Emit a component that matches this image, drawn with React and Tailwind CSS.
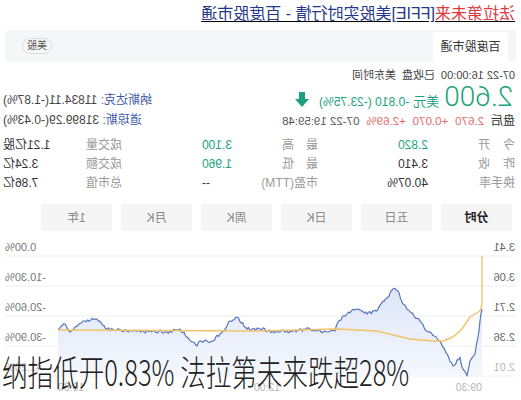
import React from 'react';

const FONT = { fontFamily: '"Liberation Sans", "Noto Sans CJK SC", sans-serif' };

// price line, page coords (drawn un-mirrored, container is flipped)
const pricePts = [
  [39, 310], [41, 322], [43, 338], [46, 355], [51, 362], [54, 377], [59, 368], [61, 358], [68, 367],
  [74, 355], [81, 342], [94, 332], [101, 322], [108, 315], [118, 305], [123, 292], [128, 290],
  [133, 298], [138, 302], [144, 312], [154, 315], [164, 310], [174, 315], [183, 323], [186, 332],
  [194, 333], [211, 330], [228, 332], [244, 333], [261, 330], [274, 330], [284, 318], [291, 322],
  [298, 332], [308, 342], [321, 342], [324, 347], [334, 338], [341, 330], [354, 333], [388, 332],
  [414, 330], [424, 320], [438, 322], [451, 333], [456, 325], [463, 330],
];

const avgPts = [
  [39, 257], [39, 305], [41, 312], [51, 318], [59, 330], [68, 338], [78, 342], [88, 342],
  [111, 340], [144, 332], [184, 330], [261, 332], [463, 331],
];

const noise = (i) => {
  const v = Math.sin(i * 12.9898) * 43758.5453;
  return v - Math.floor(v) - 0.5;
};

const jagged = (pts, amp) => {
  const out = [];
  let k = 0;
  for (let i = 0; i < pts.length - 1; i++) {
    const [x1, y1] = pts[i];
    const [x2, y2] = pts[i + 1];
    const steps = Math.max(1, Math.ceil((x2 - x1) / 1.6));
    for (let s = 0; s < steps; s++) {
      const t = s / steps;
      const y = y1 + (y2 - y1) * t + (s === 0 ? 0 : noise(k++) * amp * 2);
      out.push([x1 + (x2 - x1) * t, y]);
    }
  }
  out.push(pts[pts.length - 1]);
  return out;
};

const toPath = (pts) => pts.map((p, i) => `${i ? 'L' : 'M'}${p[0].toFixed(1)} ${p[1].toFixed(1)}`).join(' ');

const stats = [
  ['今', '开', '2.820', 'text-[#1ba27c]', '最', '高', '3.100', 'text-[#1ba27c]', '成交量', '1.21亿股'],
  ['昨', '收', '3.410', 'text-[#333]', '最', '低', '1.960', 'text-[#1ba27c]', '成交额', '3.24亿'],
  ['换手率', null, '40.07%', 'text-[#333]', '市盈(TTM)', null, '--', 'text-[#333]', '总市值', '7.86亿'],
];

const periods = ['分时', '五日', '日K', '周K', '月K', '1年'];

const Chart = () => {
  const line = jagged(pricePts, 1.6);
  const fill = `${toPath(line)} L463 378 L39 378 Z`;
  const grid = [257, 287, 317, 347, 377];
  const left = ['3.41', '3.06', '2.71', '2.36', '2.01'];
  const right = ['0.00%', '-10.30%', '-20.60%', '-30.90%', '-41.20%'];
  return (
    <svg width="521" height="160" viewBox="0 240 521 160" className="block mt-[8px]">
      <defs>
        <linearGradient id="f" x1="0" y1="0" x2="0" y2="1">
          <stop offset="0" stopColor="#dde5f7" />
          <stop offset="1" stopColor="#f5f8fd" />
        </linearGradient>
      </defs>
      {grid.map((y) => (
        <line key={y} x1="5" x2="516" y1={y} y2={y} stroke="#eeeeee" strokeWidth="1" />
      ))}
      <path d={fill} fill="url(#f)" />
      <path d={toPath(line)} fill="none" stroke="#5676bf" strokeWidth="1.2" strokeLinejoin="round" />
      <path d={toPath(avgPts)} fill="none" stroke="#f2c46a" strokeWidth="1.4" strokeLinejoin="round" />
      {left.map((t, i) => (
        <text key={t} x="6" y={252 + i * 30} fontSize="11" fill={i === 4 ? '#bbbbbb' : '#666666'} style={FONT}>{t}</text>
      ))}
      {right.map((t, i) => (
        <text key={t} x="516" y={252 + i * 30} fontSize="11" textAnchor="end" fill={i === 4 ? '#bbbbbb' : '#777777'} style={FONT}>{t}</text>
      ))}
      <text x="39" y="392" fontSize="10.5" fill="#b5b5b5" style={FONT}>09:30</text>
      <text x="254" y="392" fontSize="10.5" textAnchor="middle" fill="#b5b5b5" style={FONT}>12:00</text>
      <text x="463" y="392" fontSize="10.5" textAnchor="end" fill="#b5b5b5" style={FONT}>16:00</text>
    </svg>
  );
};

const Label = ({ a, b, w }) =>
  b ? (
    <span className={`${w} flex justify-between text-[#9a9a9a]`}><span>{a}</span><span>{b}</span></span>
  ) : (
    <span className={`${w} whitespace-nowrap text-[#9a9a9a]`}>{a}</span>
  );

export default function App() {
  return (
    <div className="relative w-[521px] h-[400px] overflow-hidden bg-white" style={FONT}>
      <div className="-scale-x-100 h-full">
        <div className="h-[28px] pt-[3px] pl-[6px] text-[16px] leading-[22px] underline underline-offset-2">
          <span className="text-[#e0393e]">法拉第未来</span>
          <span className="text-[#26378a]">[FFIE]美股实时行情 - 百度股市通</span>
        </div>

        <div className="mx-[5px] mt-[2px] h-[32px] bg-[#f5f6f7] rounded-[4px] flex items-end justify-between pl-[8px] pr-[17px]">
          <div className="w-[75px] h-[30px] bg-white rounded-t-[4px] flex items-center justify-center text-[12px] text-[#333]">百度股市通</div>
          <span className="self-center mb-[1px] h-[16px] px-[4px] rounded-full border border-[#dddddd] bg-[#f7f7f7] text-[10px] leading-[14px] text-[#555]">美股</span>
        </div>

        <div className="mt-[6px] h-[14px] pl-[6px] text-[11px] leading-[14px] text-[#444] flex gap-[6px]">
          <span>07-22 16:00:00</span><span>已收盘</span><span>美东时间</span>
        </div>

        <div className="flex justify-between pl-[6px] pr-[3px]">
          <div>
            <div className="h-[30px] flex items-baseline text-[#1ba27c]">
              <span className="pl-[2px] text-[28px] leading-[30px] font-light" style={{ fontFamily: 'Roboto, sans-serif' }}>2.600</span>
              <span className="ml-[5px] text-[13px]">美元</span>
              <span className="ml-[4px] text-[12px]">-0.810 (-23.75%)</span>
              <svg width="14" height="15" viewBox="0 0 14 15" className="ml-[10px] self-center mt-[4px]">
                <rect x="4" y="0" width="6" height="8" fill="#1ba27c" />
                <path d="M0 7 L14 7 L7 15 Z" fill="#1ba27c" />
              </svg>
            </div>
            <div className="h-[16px] mt-[1px] flex items-center text-[11.5px] leading-[16px] gap-[7px]">
              <span className="text-[12px] text-[#333]">盘后</span>
              <span className="text-[#e46a6a]">2.670</span>
              <span className="text-[#e46a6a]">+0.070</span>
              <span className="text-[#e46a6a]">+2.69%</span>
              <span className="text-[#555]">07-22 19:59:48</span>
            </div>
          </div>
          <div className="pt-[8px] text-[12px] leading-[20px] text-right text-[#444]">
            <div><span className="text-[#3a58a8]">纳斯达克: </span>11834.11(-1.87%)</div>
            <div><span className="text-[#3a58a8]">道琼斯: </span>31899.29(-0.43%)</div>
          </div>
        </div>

        <div className="mt-[6px] text-[12px]">
          {stats.map((r) => (
            <div key={r[8]} className="h-[19px] leading-[19px] flex pl-[6px] pr-[3px]">
              <Label a={r[0]} b={r[1]} w="w-[37px]" />
              <span className={`ml-[50px] w-[60px] ${r[3]}`}>{r[2]}</span>
              <span className="ml-[50px] w-[60px] flex">
                {r[5] ? (
                  <span className="w-[36px] flex justify-between text-[#9a9a9a]"><span>{r[4]}</span><span>{r[5]}</span></span>
                ) : (
                  <span className="whitespace-nowrap text-[#9a9a9a]">{r[4]}</span>
                )}
              </span>
              <span className={`w-[56px] text-right ${r[7]}`}>{r[6]}</span>
              <span className="ml-[80px] w-[60px] text-[#9a9a9a]">{r[8]}</span>
              <span className="flex-1 text-right text-[#333]">{r[9]}</span>
            </div>
          ))}
        </div>

        <div className="mt-[11px] pl-[9px] flex gap-[9px]">
          {periods.map((p, i) => (
            <div
              key={p}
              className={`w-[71px] h-[27px] rounded-[3px] bg-[#f5f5f6] flex items-center justify-center text-[12px] ${i === 0 ? 'font-bold text-[#222]' : 'text-[#888]'}`}
            >
              {p}
            </div>
          ))}
        </div>

        <Chart />
      </div>

      <div
        className="absolute left-[2px] top-[351px] text-[35px] leading-[40px] font-light text-[#222] whitespace-nowrap origin-left scale-x-[0.73]"
        style={{ fontFamily: '"Noto Sans CJK SC", sans-serif' }}
      >
        纳指低开0.83% 法拉第未来跌超28%
      </div>
    </div>
  );
}
